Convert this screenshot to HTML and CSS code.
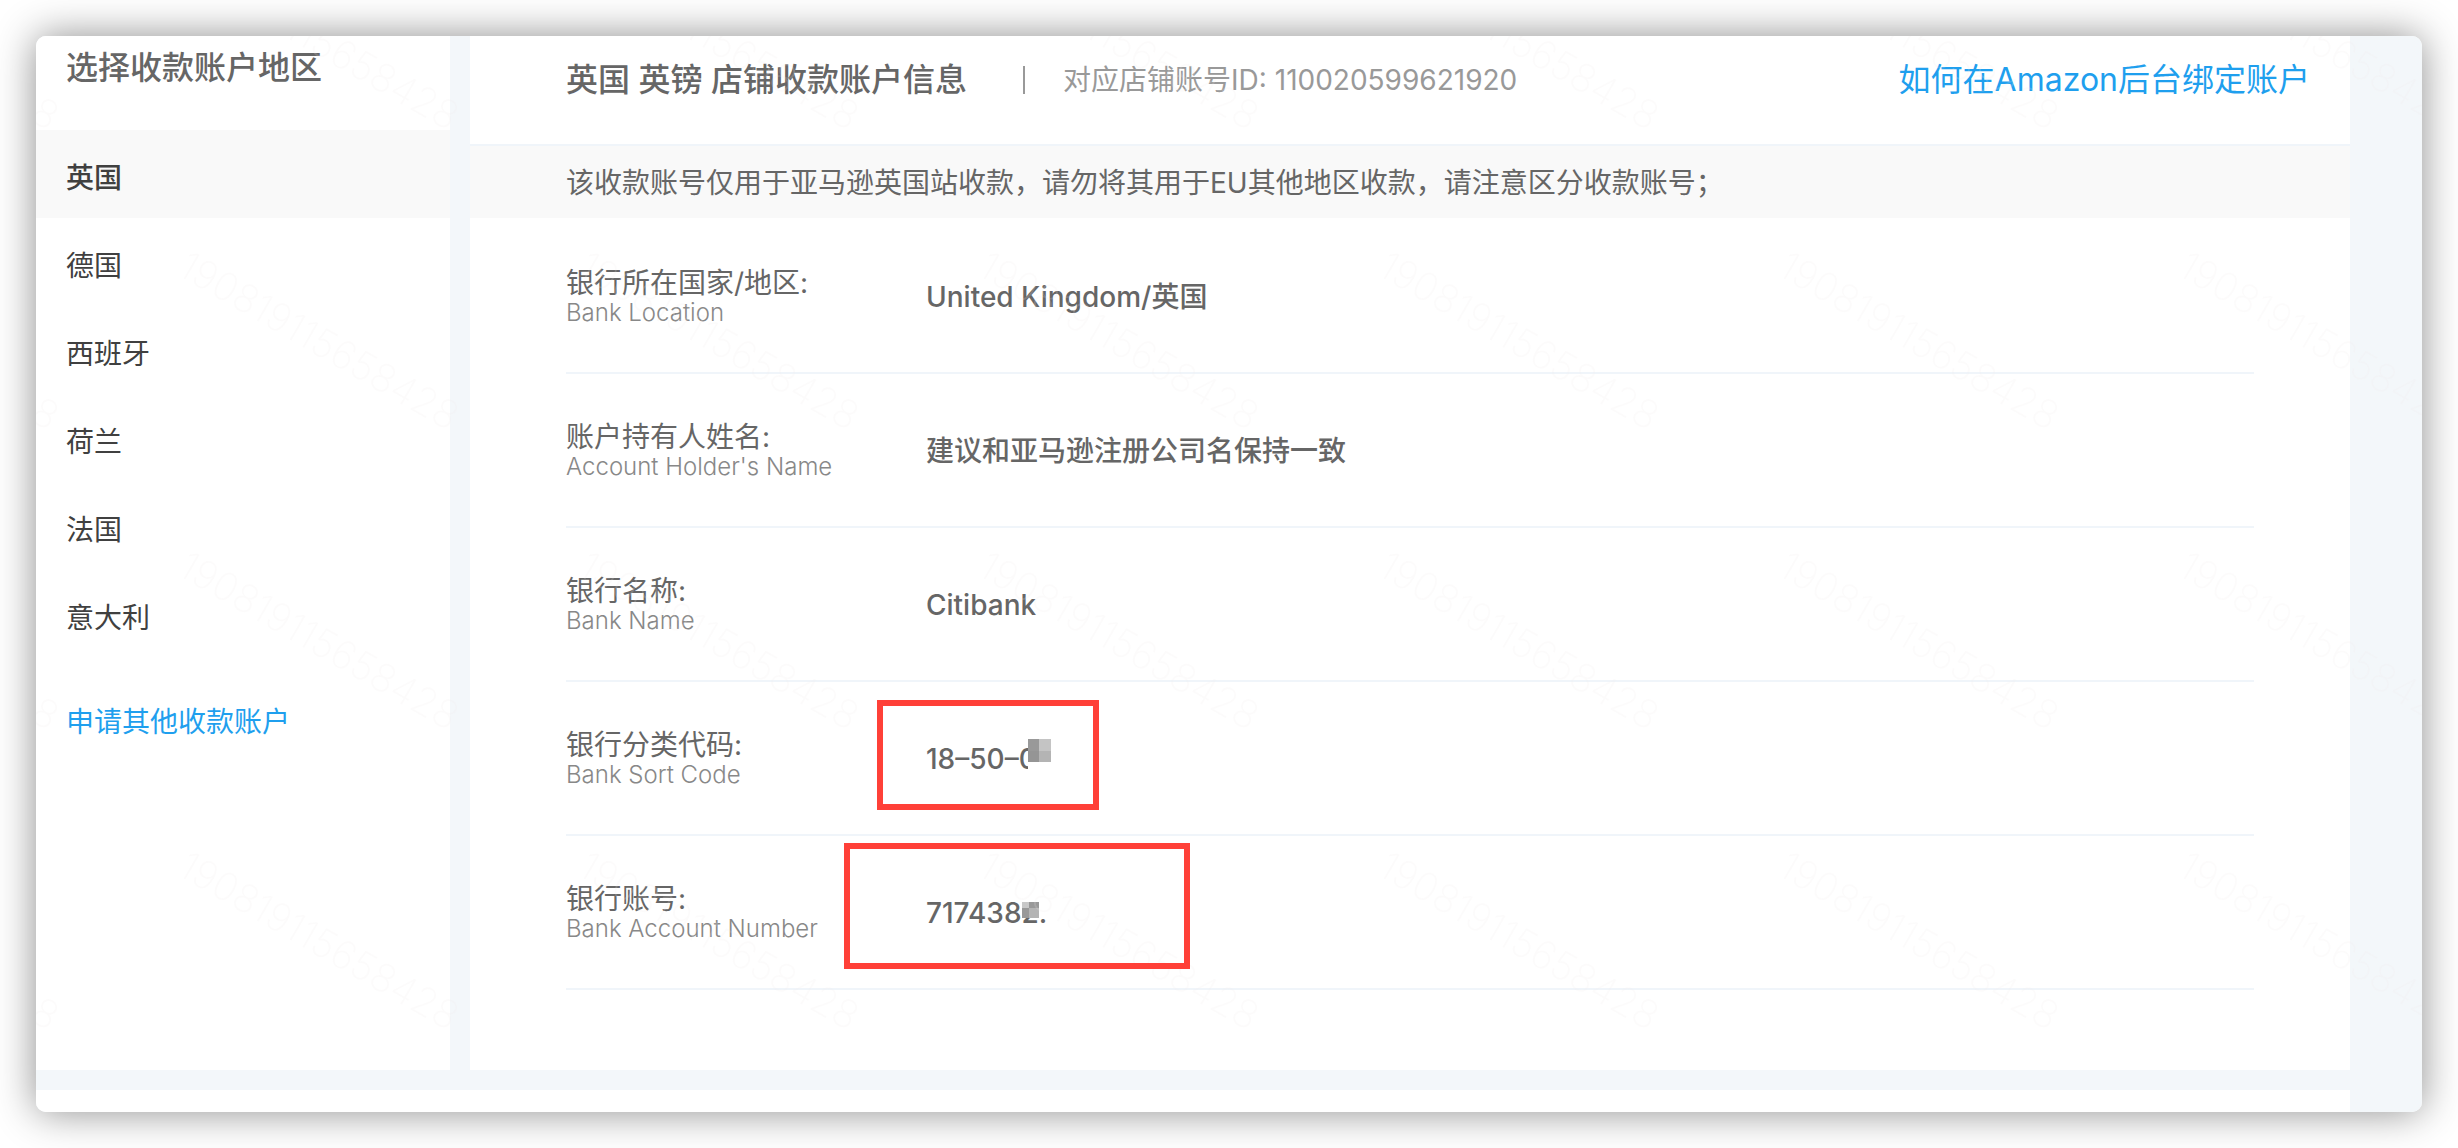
FILE: index.html
```
<!DOCTYPE html>
<html lang="zh-CN">
<head>
    <meta charset="UTF-8">
    <meta name="viewport" content="width=device-width, initial-scale=1.0">
    <title>店铺收款账户信息</title>
    <link rel="stylesheet" href="styles.css">
</head>
<body>
    <div class="window">
        <div class="content">
            <nav class="sidebar">
                <h2 class="sidebar-title">选择收款账户地区</h2>
                <ul class="region-list">
                    <li><a href="#uk" class="active">英国</a></li>
                    <li><a href="#de">德国</a></li>
                    <li><a href="#es">西班牙</a></li>
                    <li><a href="#nl">荷兰</a></li>
                    <li><a href="#fr">法国</a></li>
                    <li><a href="#it">意大利</a></li>
                </ul>
                <a href="#apply" class="apply-link">申请其他收款账户</a>
            </nav>

            <main class="account">
                <header class="account-header">
                    <h1>英国 英镑 店铺收款账户信息</h1>
                    <span class="divider"></span>
                    <span class="shop-id">对应店铺账号ID: 110020599621920</span>
                    <a href="#help" class="help-link">如何在Amazon后台绑定账户</a>
                </header>
                <p class="notice">该收款账号仅用于亚马逊英国站收款，请勿将其用于EU其他地区收款，请注意区分收款账号；</p>

                <dl class="details">
                    <div class="row">
                        <dt>银行所在国家/地区:<small>Bank Location</small></dt>
                        <dd>United Kingdom/英国</dd>
                    </div>
                    <div class="row">
                        <dt>账户持有人姓名:<small>Account Holder's Name</small></dt>
                        <dd>建议和亚马逊注册公司名保持一致</dd>
                    </div>
                    <div class="row">
                        <dt>银行名称:<small>Bank Name</small></dt>
                        <dd>Citibank</dd>
                    </div>
                    <div class="row">
                        <dt>银行分类代码:<small>Bank Sort Code</small></dt>
                        <dd>18–50–0<span class="mosaic mosaic-code"></span><span class="mark mark-code"></span></dd>
                    </div>
                    <div class="row">
                        <dt>银行账号:<small>Bank Account Number</small></dt>
                        <dd>7174382.<span class="mosaic mosaic-number"></span><span class="mark mark-number"></span></dd>
                    </div>
                </dl>
            </main>
        </div>
        <div class="next-panel"></div>

        <svg class="watermark" aria-hidden="true">
            <defs>
                <pattern id="wm" width="400" height="300" patternUnits="userSpaceOnUse" x="138" y="-100">
                    <text transform="translate(2 38) rotate(30)">190819115658428</text>
                </pattern>
            </defs>
            <rect width="100%" height="100%" fill="url(#wm)"/>
        </svg>
    </div>
</body>
</html>
```
FILE: styles.css
```
* {
    box-sizing: border-box;
}
body {
    margin: 0;
    padding: 36px;
    background: #fff;
    color: #666;
    font-family: Inter, "Noto Sans CJK SC", sans-serif;
    font-size: 28px;
    line-height: 40px;
}
h1, h2, p, ul, dl, dd {
    margin: 0;
    padding: 0;
}
h1, h2 {
    font-size: 32px;
    font-weight: 500;
}
a {
    color: #1f9fee;
    text-decoration: none;
}
.window {
    position: relative;
    overflow: hidden;
    border-radius: 10px;
    background: #f3f7fa;
}
body::before {
    content: "";
    position: absolute;
    inset: 36px;
    border-radius: 10px;
    box-shadow: 0 0 40px rgba(0, 0, 0, 0.45);
}
.content {
    display: flex;
    gap: 20px;
    padding-right: 72px;
}
.sidebar {
    flex: 0 0 414px;
    background: #fff;
}
.sidebar-title {
    padding: 12px 30px 42px;
}
.region-list {
    list-style: none;
}
.region-list a {
    display: block;
    padding: 28px 30px 20px;
    color: #404040;
}
.region-list a.active {
    background: #f9f9f9;
    font-weight: 500;
}
.apply-link {
    display: block;
    padding: 44px 30px;
}
.account {
    flex: 1;
    padding-bottom: 80px;
    background: #fff;
}
.account-header {
    display: flex;
    align-items: center;
    height: 110px;
    padding: 0 40px 20px 96px;
    border-bottom: 2px solid #f0f5fa;
}
.divider {
    width: 2px;
    height: 28px;
    margin: 0 38px 0 56px;
    background: #999;
}
.shop-id {
    color: #999;
}
.help-link {
    margin-left: auto;
    font-size: 32px;
}
.notice {
    padding: 17px 96px 15px;
    background: #f9f9f9;
}
.details {
    padding: 2px 96px 0;
}
.row {
    display: flex;
    align-items: center;
    height: 154px;
    padding-top: 2px;
    border-bottom: 2px solid #f0f5fa;
}
.row dt {
    width: 360px;
    line-height: 32px;
}
.row small {
    display: block;
    color: #888;
    font-size: 24px;
    font-weight: 300;
    line-height: 28px;
}
.row dd {
    position: relative;
    font-weight: 500;
}
/* pixelated patches over the private digits */
.mosaic {
    position: absolute;
}
.mosaic-code {
    left: 102px;
    top: 0;
    width: 23px;
    height: 36px;
    background:
        linear-gradient(90deg, #999 50%, #c4c4c4 50%) 0 0 / 100% 12px no-repeat,
        linear-gradient(90deg, #959595 50%, #b4b4b4 50%) 0 12px / 100% 11px no-repeat,
        #fff;
}
.mosaic-number {
    left: 96px;
    top: 9px;
    width: 17px;
    height: 16px;
    background:
        linear-gradient(90deg, #c8c8c8 40%, #999 40%) 0 0 / 100% 6px no-repeat,
        linear-gradient(90deg, #999 40%, #b4b4b4 40%) 0 6px / 100% 10px no-repeat;
}
.mark {
    position: absolute;
    z-index: 1;
    border: 6px solid #ff4038;
}
.mark-code {
    left: -49px;
    top: -39px;
    width: 222px;
    height: 110px;
}
.mark-number {
    left: -82px;
    top: -50px;
    width: 346px;
    height: 126px;
}
.next-panel {
    height: 22px;
    margin: 20px 72px 0 0;
    background: #fff;
}
.watermark {
    position: absolute;
    inset: 0;
    width: 100%;
    height: 100%;
    pointer-events: none;
}
.watermark text {
    font-size: 39px;
    font-weight: 200;
    fill: rgba(240, 234, 234, 0.18);
}
```
